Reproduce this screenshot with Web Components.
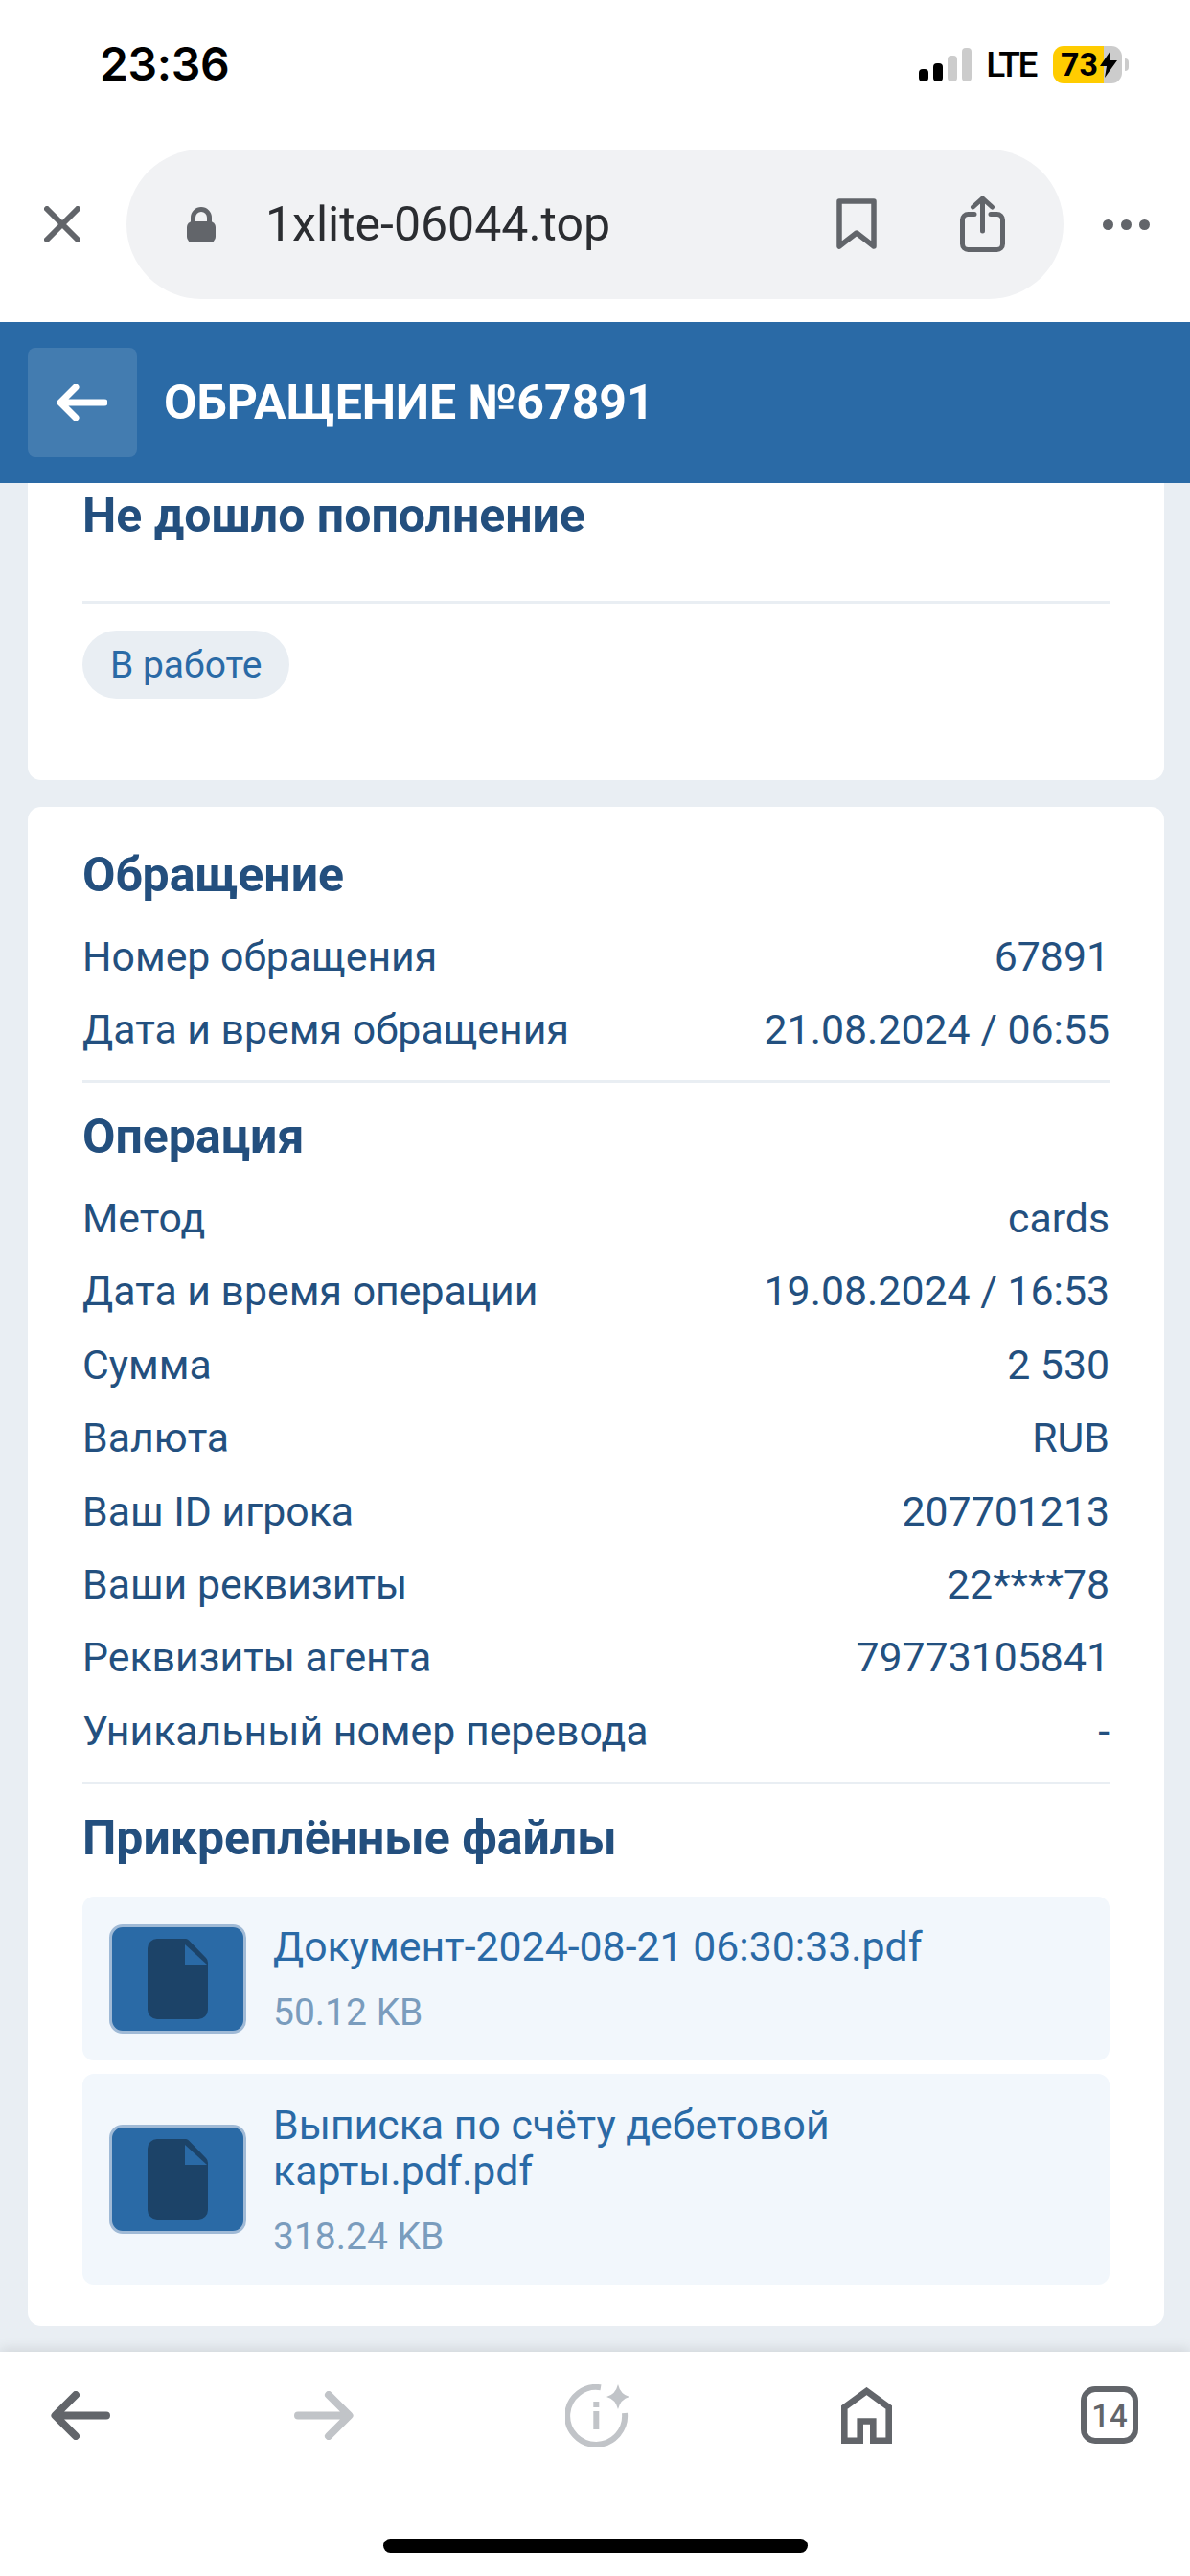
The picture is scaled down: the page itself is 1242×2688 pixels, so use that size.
<!DOCTYPE html>
<html lang="ru">
<head>
<meta charset="utf-8">
<title>Обращение №67891</title>
<style>
  html, body { margin: 0; padding: 0; background: #e9eef3; }
  body { font-family: Roboto, "Liberation Sans", sans-serif; }
  .screen { display: flex; flex-direction: column; width: 1242px; height: 2688px; overflow: hidden; }
</style>
</head>
<body>
<div class="screen">
  <status-bar time="23:36" battery="73"></status-bar>
  <browser-bar url="1xlite-06044.top"></browser-bar>
  <page-header>ОБРАЩЕНИЕ №67891</page-header>
  <page-content>
    <ticket-summary status="В работе">Не дошло пополнение</ticket-summary>
    <ticket-details>
      <section-title>Обращение</section-title>
      <info-row label="Номер обращения" value="67891"></info-row>
      <info-row label="Дата и время обращения" value="21.08.2024 / 06:55"></info-row>
      <section-divider></section-divider>
      <section-title>Операция</section-title>
      <info-row label="Метод" value="cards"></info-row>
      <info-row label="Дата и время операции" value="19.08.2024 / 16:53"></info-row>
      <info-row label="Сумма" value="2 530"></info-row>
      <info-row label="Валюта" value="RUB"></info-row>
      <info-row label="Ваш ID игрока" value="207701213"></info-row>
      <info-row label="Ваши реквизиты" value="22****78"></info-row>
      <info-row label="Реквизиты агента" value="79773105841"></info-row>
      <info-row label="Уникальный номер перевода" value="-"></info-row>
      <section-divider></section-divider>
      <section-title>Прикреплённые файлы</section-title>
      <file-item size="50.12 KB">Документ-2024-08-21 06:30:33.pdf</file-item>
      <file-item size="318.24 KB">Выписка по счёту дебетовой<br>карты.pdf.pdf</file-item>
    </ticket-details>
  </page-content>
  <bottom-toolbar tabs="14"></bottom-toolbar>
</div>

<script>
class StatusBar extends HTMLElement {
    constructor() {
        super();
        this.attachShadow({ mode: 'open' });
        this.shadowRoot.innerHTML = `
      <style>
        :host { display: flex; align-items: center; box-sizing: border-box; height: 156px; padding: 0 64px 22px 104px; background: #fff; color: #000; flex: none; }
        .time { font: 600 48px/1 Inter, sans-serif; letter-spacing: -.3px; }
        .right { margin-left: auto; display: flex; align-items: center; }
        .signal { display: flex; align-items: flex-end; gap: 5px; height: 35px; }
        .signal i { display: block; width: 10px; border-radius: 4px; background: #000; }
        .signal i.off { background: #ccc; }
        .lte { font: 500 37px/1 Roboto, sans-serif; letter-spacing: -2.400px; margin-left: 15px; }
        .battery { display: flex; align-items: center; width: 72px; height: 39px; box-sizing: border-box; padding-left: 8px; margin-left: 18px; border-radius: 11px;
          background: linear-gradient(90deg, #ffcc00 73%, #cccccc 73%); font: 700 34px/1 Roboto, sans-serif; }
        .battery svg { margin-left: 2px; }
        .nub { width: 4px; height: 13px; margin-left: 3px; border-radius: 0 7px 7px 0; background: #ccc; }
      </style>
      <span class="time"></span>
      <div class="right">
        <div class="signal">
          <i style="height:13px"></i><i style="height:19px"></i><i class="off" style="height:27px"></i><i class="off" style="height:35px"></i>
        </div>
        <span class="lte">LTE</span>
        <div class="battery"><span class="level"></span>
          <svg width="18" height="28" viewBox="0 0 18 28"><path d="M11 0 0 16h7l-2 12L18 10h-8z" fill="#000"/></svg>
        </div>
        <div class="nub"></div>
      </div>
    `;
    }

    connectedCallback() {
        this.shadowRoot.querySelector('.time').textContent = this.getAttribute('time');
        this.shadowRoot.querySelector('.level').textContent = this.getAttribute('battery');
    }
}

class BrowserBar extends HTMLElement {
    constructor() {
        super();
        this.attachShadow({ mode: 'open' });
        this.shadowRoot.innerHTML = `
      <style>
        :host { display: flex; align-items: center; box-sizing: border-box; height: 180px; padding: 0 41px 24px 46px; background: #fff; flex: none; }
        .close { width: 38px; height: 38px; flex: none; }
        .pill { display: flex; align-items: center; width: 978px; height: 156px; box-sizing: border-box; margin-left: 48px; padding: 0 61px 0 63px; border-radius: 78px; background: #f1f2f4; flex: none; }
        .lock { width: 30px; height: 37px; flex: none; }
        .url { margin-left: 52px; font: 400 50px/1 Roboto, sans-serif; color: #2b2d31; }
        .bookmark { margin-left: auto; width: 42px; height: 54px; }
        .share { margin-left: 87px; width: 47px; height: 60px; }
        .dots { display: flex; gap: 8px; margin-left: 41px; }
        .dots i { width: 11px; height: 11px; border-radius: 50%; background: #62656a; }
      </style>
      <svg class="close" viewBox="0 0 38 38"><path d="M3 3l32 32M35 3 3 35" stroke="#62656a" stroke-width="6" stroke-linecap="round" fill="none"/></svg>
      <div class="pill">
        <svg class="lock" viewBox="0 0 30 37"><path d="M6.500 16V11a8.500 8.500 0 0 1 17 0v5" fill="none" stroke="#62656a" stroke-width="5"/><rect y="15" width="30" height="22" rx="6" fill="#62656a"/></svg>
        <span class="url"></span>
        <svg class="bookmark" viewBox="0 0 42 54"><path d="M3 3h36v47L21 36 3 50z" fill="none" stroke="#62656a" stroke-width="5.500" stroke-linejoin="round"/></svg>
        <svg class="share" viewBox="0 0 47 60"><path d="M15 19.500H8.500a6 6 0 0 0-6 6v25a6 6 0 0 0 6 6h30a6 6 0 0 0 6-6v-25a6 6 0 0 0-6-6H32" fill="none" stroke="#62656a" stroke-width="5" stroke-linecap="round"/><path d="M23.500 37V3M13.500 12l10-9 10 9" fill="none" stroke="#62656a" stroke-width="5" stroke-linecap="round" stroke-linejoin="round"/></svg>
      </div>
      <div class="dots"><i></i><i></i><i></i></div>
    `;
    }

    connectedCallback() {
        this.shadowRoot.querySelector('.url').textContent = this.getAttribute('url');
    }
}

class PageHeader extends HTMLElement {
    constructor() {
        super();
        this.attachShadow({ mode: 'open' });
        this.shadowRoot.innerHTML = `
      <style>
        :host { display: flex; align-items: center; height: 168px; padding-left: 29px; background: #2a6aa6; color: #fff; font: 700 50px/1 Roboto, sans-serif; flex: none; }
        .back { display: flex; align-items: center; justify-content: center; width: 114px; height: 114px; border-radius: 8px; background: rgba(255,255,255,.12); margin-right: 28px; }
      </style>
      <div class="back">
        <svg width="52" height="38" viewBox="0 0 52 38"><path d="M49 19H4M19 3 3 19l16 16" fill="none" stroke="#fff" stroke-width="7" stroke-linecap="round" stroke-linejoin="round"/></svg>
      </div>
      <slot></slot>
    `;
    }
}

class PageContent extends HTMLElement {
    constructor() {
        super();
        this.attachShadow({ mode: 'open' });
        this.shadowRoot.innerHTML = `
      <style>
        :host { display: flex; flex-direction: column; gap: 28px; height: 1950px; padding: 0 27px 0 29px; background: #e9eef3; flex: none; }
      </style>
      <slot></slot>
    `;
    }
}

class TicketSummary extends HTMLElement {
    constructor() {
        super();
        this.attachShadow({ mode: 'open' });
        this.shadowRoot.innerHTML = `
      <style>
        :host { display: block; padding: 5.500px 57px 85px; background: #fff; border-radius: 0 0 14px 14px; }
        h2 { margin: 0; padding-bottom: 61.500px; border-bottom: 3px solid #e9eef3; font: 700 50px/56px Roboto, sans-serif; color: #234f7e; }
        .status { display: flex; align-items: center; width: fit-content; height: 71px; box-sizing: border-box; margin-top: 28px; padding: 2px 29px 0; border-radius: 36px; background: #e9eef3; color: #2a6aa6; font: 400 39px/1 Roboto, sans-serif; }
      </style>
      <h2><slot></slot></h2>
      <span class="status"></span>
    `;
    }

    connectedCallback() {
        this.shadowRoot.querySelector('.status').textContent = this.getAttribute('status');
    }
}

class TicketDetails extends HTMLElement {
    constructor() {
        super();
        this.attachShadow({ mode: 'open' });
        this.shadowRoot.innerHTML = `
      <style>
        :host { display: flex; flex-direction: column; height: 1585px; box-sizing: border-box; padding: 15px 57px 0; background: #fff; border-radius: 14px; }
      </style>
      <slot></slot>
    `;
    }
}

class SectionTitle extends HTMLElement {
    constructor() {
        super();
        this.attachShadow({ mode: 'open' });
        this.shadowRoot.innerHTML = `
      <style>
        :host { display: flex; align-items: center; box-sizing: border-box; height: 88px; padding-top: 2px; margin: 11px 0 4px; color: #234f7e; font: 700 50px/1 Roboto, sans-serif; flex: none; }
      </style>
      <slot></slot>
    `;
    }
}

class SectionDivider extends HTMLElement {
    constructor() {
        super();
        this.attachShadow({ mode: 'open' });
        this.shadowRoot.innerHTML = `
      <style>
        :host { display: block; height: 3px; margin-top: 14.500px; background: #e9eef3; flex: none; }
      </style>
    `;
    }
}

class InfoRow extends HTMLElement {
    constructor() {
        super();
        this.attachShadow({ mode: 'open' });
        this.shadowRoot.innerHTML = `
      <style>
        :host { display: flex; align-items: center; justify-content: space-between; height: 76.400px; color: #23507f; font: 400 42.800px/1 Roboto, sans-serif; flex: none; }
      </style>
      <span class="label"></span>
      <span class="value"></span>
    `;
    }

    connectedCallback() {
        this.shadowRoot.querySelector('.label').textContent = this.getAttribute('label');
        this.shadowRoot.querySelector('.value').textContent = this.getAttribute('value');
    }
}

class FileItem extends HTMLElement {
    constructor() {
        super();
        this.attachShadow({ mode: 'open' });
        this.shadowRoot.innerHTML = `
      <style>
        :host { display: flex; align-items: center; margin-top: 14px; padding: 28.250px 28px; background: #f2f7fc; border-radius: 12px; flex: none; }
        .icon { display: flex; align-items: center; justify-content: center; width: 143px; height: 114px; box-sizing: border-box; border: 3px solid #a0bad6; border-radius: 14px; background: #2a6aa6; flex: none; }
        .text { margin-left: 28px; padding-bottom: 2px; }
        .name { color: #2a6aa6; font: 400 42.800px/48px Roboto, sans-serif; }
        .size { margin-top: 26px; color: #7a9cbd; font: 400 39px/1 Roboto, sans-serif; }
      </style>
      <div class="icon">
        <svg width="63" height="84" viewBox="0 0 63 84"><path d="M10 0h30a5 5 0 0 1 3 1.500L61 20q2 2 2 5v49a10 10 0 0 1-10 10H10A10 10 0 0 1 0 74V10A10 10 0 0 1 10 0z" fill="#1c4368"/><path d="M39 6v21h23z" fill="#2a6aa6"/></svg>
      </div>
      <div class="text">
        <div class="name"><slot></slot></div>
        <div class="size"></div>
      </div>
    `;
    }

    connectedCallback() {
        this.shadowRoot.querySelector('.size').textContent = this.getAttribute('size');
    }
}

class BottomToolbar extends HTMLElement {
    constructor() {
        super();
        this.attachShadow({ mode: 'open' });
        this.shadowRoot.innerHTML = `
      <style>
        :host { display: block; height: 234px; background: #fff; box-shadow: 0 -3px 12px rgba(0,0,0,.1); flex: none; position: relative; }
        .icons { display: grid; grid-template-columns: 168px 340px 231px 331px 172px; height: 132px; }
        .icons > * { place-self: center; }
        .tabs { display: flex; align-items: center; justify-content: center; width: 60px; height: 60px; margin-left: 4px; box-sizing: border-box; border: 6.500px solid #62656a; border-radius: 15px; color: #62656a; font: 500 33px/1 Roboto, sans-serif; }
        .indicator { width: 443px; height: 15px; margin: 63px auto 0; border-radius: 8px; background: #000; }
      </style>
      <div class="icons">
        <svg width="62" height="51" viewBox="0 0 62 51"><path d="M58 25.500H5M26 4 4.500 25.500 26 47" fill="none" stroke="#62656a" stroke-width="8" stroke-linecap="round" stroke-linejoin="round"/></svg>
        <svg width="62" height="51" viewBox="0 0 62 51"><path d="M4 25.500h53M36 4l21.500 21.500L36 47" fill="none" stroke="#c1c4c8" stroke-width="8" stroke-linecap="round" stroke-linejoin="round"/></svg>
        <svg width="67" height="65" viewBox="0 0 67 65"><path d="M37 3.300A30 30 0 1 0 62 30" fill="none" stroke="#c1c4c8" stroke-width="6"/><path d="M29.300 18h6v6h-6zM29.300 28h6v19h-6z" fill="#c1c4c8"/><path d="M55 0q2.500 10.500 12 13-9.500 2.500-12 13-2.500-10.500-12-13 9.500-2.500 12-13z" fill="#c1c4c8"/></svg>
        <svg width="53" height="59" viewBox="0 0 53 59"><path d="M19.700 55.700H3.300V21L26.500 4l23.200 17v34.700H33.300V35.500H19.700z" fill="none" stroke="#62656a" stroke-width="6.600"/></svg>
        <div class="tabs"></div>
      </div>
      <div class="indicator"></div>
    `;
    }

    connectedCallback() {
        this.shadowRoot.querySelector('.tabs').textContent = this.getAttribute('tabs');
    }
}

customElements.define('status-bar', StatusBar);
customElements.define('browser-bar', BrowserBar);
customElements.define('page-header', PageHeader);
customElements.define('page-content', PageContent);
customElements.define('ticket-summary', TicketSummary);
customElements.define('ticket-details', TicketDetails);
customElements.define('section-title', SectionTitle);
customElements.define('section-divider', SectionDivider);
customElements.define('info-row', InfoRow);
customElements.define('file-item', FileItem);
customElements.define('bottom-toolbar', BottomToolbar);
</script>
</body>
</html>
